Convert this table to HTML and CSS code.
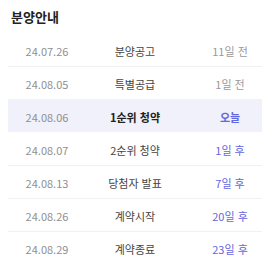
FILE: index.html
```html
<!DOCTYPE html>
<html lang="ko">
<head>
<meta charset="utf-8">
<link rel="stylesheet" href="styles.css">
</head>
<body>
<div class="panel">
  <h2 class="title">분양안내</h2>
  <div class="list">
    <div class="row"><span class="date">24.07.26</span><span class="label">분양공고</span><span class="days past">11일 전</span></div>
    <div class="row"><span class="date">24.08.05</span><span class="label">특별공급</span><span class="days past">1일 전</span></div>
    <div class="row today"><span class="date">24.08.06</span><span class="label">1순위 청약</span><span class="days">오늘</span></div>
    <div class="row"><span class="date">24.08.07</span><span class="label">2순위 청약</span><span class="days">1일 후</span></div>
    <div class="row"><span class="date">24.08.13</span><span class="label">당첨자 발표</span><span class="days">7일 후</span></div>
    <div class="row"><span class="date">24.08.26</span><span class="label">계약시작</span><span class="days">20일 후</span></div>
    <div class="row"><span class="date">24.08.29</span><span class="label">계약종료</span><span class="days">23일 후</span></div>
  </div>
</div>
</body>
</html>
```
FILE: styles.css
```css
html, body { margin: 0; padding: 0; background: #fff; }
body { font-family: "Noto Sans CJK KR", "Noto Sans", sans-serif; width: 270px; height: 263px; overflow: hidden; }
.panel { padding: 8px 8px 0 8px; }
.title { margin: 0 0 0 3px; font-size: 13px; font-weight: 700; color: #222; line-height: 18px; height: 25px; }
.list { display: flex; flex-direction: column; }
.row { display: grid; grid-template-columns: 78px 1fr 64px; align-items: center; height: 33px; padding-top: 2px; border-top: 1px solid #f1f1f3; box-sizing: border-box; font-size: 11px; text-align: center; }
.row:first-child { border-top-color: transparent; }
.date { color: #8f8f8f; }
.label { color: #444; padding-right: 14px; }
.days { color: #6366e0; }
.days.past { color: #999; }
.today { background: #f0f1fb; border-top-color: transparent; }
.today + .row { border-top-color: transparent; }
.today .label { font-weight: 700; color: #222; }
.today .days { font-weight: 700; }
```
